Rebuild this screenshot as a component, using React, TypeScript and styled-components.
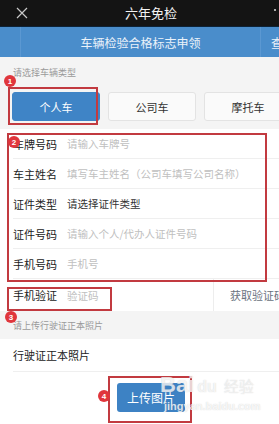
import React from "react";
import styled, { createGlobalStyle } from "styled-components";

const Global = createGlobalStyle`
  html, body { margin: 0; padding: 0; background: #f4f4f4; }
  body { font-family: "Noto Sans CJK SC", "Noto Sans", sans-serif; }
  * { box-sizing: border-box; }
`;

const Screen = styled.div`
  position: relative;
  width: 279px;
  height: 424px;
  overflow: hidden;
  background: #f4f4f4;
  display: flex;
  flex-direction: column;
`;

const TopBar = styled.div`
  height: 27px;
  background: #141414;
  border-bottom: 1px solid #0d2236;
  display: flex;
  align-items: center;
  flex-shrink: 0;
`;

const CloseBtn = styled.div`
  width: 44px;
  display: flex;
  justify-content: center;
  align-items: center;
`;

const Title = styled.div`
  flex: 1;
  text-align: center;
  color: #f2f2f2;
  font-size: 13px;
  line-height: 26px;
`;

const TopRight = styled.div`
  width: 21px;
  display: flex;
  justify-content: flex-end;
  padding-right: 3px;
  align-self: flex-start;
  padding-top: 9px;
`;

const Dot = styled.span`
  width: 2px;
  height: 2px;
  border-radius: 50%;
  background: #ddd;
`;

const TabBar = styled.div`
  height: 30px;
  background: #4a8dcb;
  display: flex;
  align-items: stretch;
  flex-shrink: 0;
`;

const Tab = styled.div<{ $w?: number; $grow?: boolean }>`
  ${(p) => (p.$grow ? "flex: 1;" : `width: ${p.$w}px;`)}
  display: flex;
  align-items: center;
  justify-content: ${(p) => (p.$grow ? "center" : "flex-start")};
  color: #eaf2fa;
  font-size: 12px;
  white-space: nowrap;
  overflow: hidden;
  border-right: 1px solid #5b98d2;
  padding-left: ${(p) => (p.$grow ? 0 : 10)}px;
  &:last-child { border-right: none; }
`;

const Hint = styled.div<{ $h: number }>`
  height: ${(p) => p.$h}px;
  display: flex;
  align-items: center;
  padding-left: 13px;
  font-size: 9px;
  color: #9a9a9a;
  background: #f4f4f4;
  flex-shrink: 0;
`;

const TypeRow = styled.div`
  display: flex;
  gap: 8px;
  padding: 5px 12px 8px;
  background: #f4f4f4;
  flex-shrink: 0;
`;

const TypeBtn = styled.div<{ $active?: boolean }>`
  width: 88px;
  height: 29px;
  flex-shrink: 0;
  border-radius: 3px;
  display: flex;
  align-items: center;
  justify-content: center;
  font-size: 11px;
  color: ${(p) => (p.$active ? "#fff" : "#333")};
  background: ${(p) => (p.$active ? "#3f84c6" : "#fafafa")};
  border: 1px solid ${(p) => (p.$active ? "#3f84c6" : "#e3e3e3")};
`;

const Form = styled.div`
  background: #fff;
  flex-shrink: 0;
`;

const Row = styled.div<{ $h?: number; $line?: boolean }>`
  height: ${(p) => p.$h ?? 30}px;
  margin-left: 13px;
  display: flex;
  align-items: center;
  border-bottom: ${(p) => (p.$line === false ? "none" : "1px solid #efefef")};
`;

const Label = styled.div`
  width: 54px;
  flex-shrink: 0;
  font-size: 11px;
  color: #222;
`;

const Value = styled.div<{ $filled?: boolean }>`
  flex: 1;
  font-size: 10.5px;
  color: ${(p) => (p.$filled ? "#333" : "#c0c0c0")};
  white-space: nowrap;
  overflow: hidden;
`;

const CodeCell = styled.div`
  width: 66px;
  align-self: stretch;
  border-left: 1px solid #ededed;
  display: flex;
  align-items: center;
  padding-left: 16px;
  font-size: 11px;
  color: #6a7280;
  white-space: nowrap;
  overflow: hidden;
  flex-shrink: 0;
`;

const PhotoLabel = styled.div`
  font-size: 11px;
  color: #222;
`;

const UploadArea = styled.div`
  flex: 1;
  background: #fff;
  padding: 11px 0 0 117px;
`;

const UploadBtn = styled.div`
  width: 68px;
  height: 29px;
  border-radius: 3px;
  background: #3d82c4;
  color: #fff;
  font-size: 12px;
  display: flex;
  align-items: center;
  justify-content: center;
`;

const Mark = styled.div<{ $x: number; $y: number; $w: number; $h: number }>`
  position: absolute;
  left: ${(p) => p.$x}px;
  top: ${(p) => p.$y}px;
  width: ${(p) => p.$w}px;
  height: ${(p) => p.$h}px;
  border: 2px solid #c23a40;
  pointer-events: none;
`;

const Badge = styled.div<{ $x: number; $y: number }>`
  position: absolute;
  left: ${(p) => p.$x - 6}px;
  top: ${(p) => p.$y - 6}px;
  width: 12px;
  height: 12px;
  border-radius: 50%;
  background: #e0363c;
  color: #fff;
  font-family: "Liberation Sans", Arial, sans-serif;
  font-size: 8px;
  font-weight: bold;
  display: flex;
  align-items: center;
  justify-content: center;
`;

const Watermark = styled.div`
  position: absolute;
  left: 160px;
  top: 372px;
  color: rgba(255, 255, 255, 0.75);
  font-family: "Liberation Sans", Arial, sans-serif;
  pointer-events: none;
  text-shadow: 0 0 1px rgba(120, 120, 120, 0.35);
`;

const WmTop = styled.div`
  display: flex;
  align-items: baseline;
  gap: 3px;
  font-size: 22px;
  font-weight: bold;
  line-height: 26px;
`;

const WmCn = styled.span`
  font-family: "Noto Sans CJK SC", sans-serif;
  font-size: 15px;
  font-weight: normal;
  margin-left: 4px;
  color: rgba(255, 255, 255, 0.6);
`;

const WmSub = styled.div`
  font-size: 11px;
  font-weight: bold;
  margin-left: 4px;
  color: rgba(255, 255, 255, 0.8);
`;

export default function App() {
  return (
    <>
      <Global />
      <Screen>
        <TopBar>
          <CloseBtn>
            <svg width="12" height="12" viewBox="0 0 12 12">
              <path d="M1 1L11 11M11 1L1 11" stroke="#c8c8c8" strokeWidth="1.2" />
            </svg>
          </CloseBtn>
          <Title>六年免检</Title>
          <TopRight>
            <Dot />
          </TopRight>
        </TopBar>
        <TabBar>
          <Tab $w={21} />
          <Tab $grow>车辆检验合格标志申领</Tab>
          <Tab $w={18}>查询</Tab>
        </TabBar>
        <Hint $h={30}>请选择车辆类型</Hint>
        <TypeRow>
          <TypeBtn $active>个人车</TypeBtn>
          <TypeBtn>公司车</TypeBtn>
          <TypeBtn>摩托车</TypeBtn>
        </TypeRow>
        <Form>
          <Row>
            <Label>车牌号码</Label>
            <Value>请输入车牌号</Value>
          </Row>
          <Row>
            <Label>车主姓名</Label>
            <Value>填写车主姓名（公司车填写公司名称）</Value>
          </Row>
          <Row>
            <Label>证件类型</Label>
            <Value $filled>请选择证件类型</Value>
          </Row>
          <Row>
            <Label>证件号码</Label>
            <Value>请输入个人/代办人证件号码</Value>
          </Row>
          <Row>
            <Label>手机号码</Label>
            <Value>手机号</Value>
          </Row>
          <Row $h={32} $line={false}>
            <Label>手机验证</Label>
            <Value>验证码</Value>
            <CodeCell>获取验证码</CodeCell>
          </Row>
        </Form>
        <Hint $h={28}>请上传行驶证正本照片</Hint>
        <Form>
          <Row $h={33}>
            <PhotoLabel>行驶证正本照片</PhotoLabel>
          </Row>
        </Form>
        <UploadArea>
          <UploadBtn>上传图片</UploadBtn>
        </UploadArea>

        <Mark $x={8} $y={87} $w={90} $h={38} />
        <Mark $x={7} $y={133} $w={260} $h={149} />
        <Mark $x={7} $y={287} $w={105} $h={24} />
        <Mark $x={108} $y={376} $w={84} $h={47} />
        <Badge $x={10} $y={81}>1</Badge>
        <Badge $x={14} $y={142}>2</Badge>
        <Badge $x={11} $y={317}>3</Badge>
        <Badge $x={104} $y={396}>4</Badge>

        <Watermark>
          <WmTop>
            <span>Bai</span>
            <span style={{ fontSize: 16 }}>du</span>
            <WmCn>经验</WmCn>
          </WmTop>
          <WmSub>jingyan.baidu.com</WmSub>
        </Watermark>
      </Screen>
    </>
  );
}
